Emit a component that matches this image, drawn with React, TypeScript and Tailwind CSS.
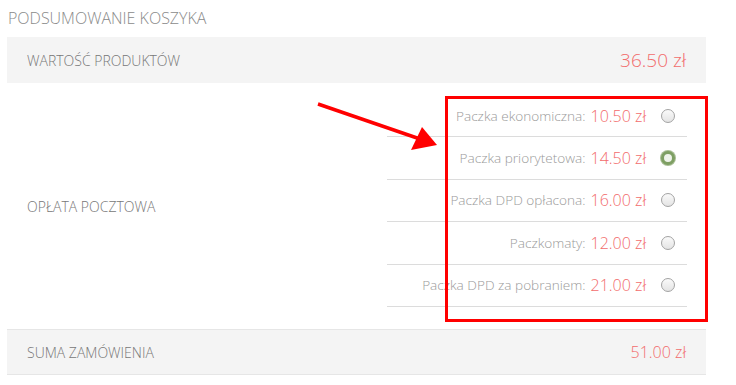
import React, { useState } from 'react';

const options = [
  { id: 'eko', label: 'Paczka ekonomiczna:', price: '10.50 zł' },
  { id: 'prio', label: 'Paczka priorytetowa:', price: '14.50 zł' },
  { id: 'dpd', label: 'Paczka DPD opłacona:', price: '16.00 zł' },
  { id: 'paczkomaty', label: 'Paczkomaty:', price: '12.00 zł' },
  { id: 'dpd-cod', label: 'Paczka DPD za pobraniem:', price: '21.00 zł' },
];

function Radio({ checked, onClick }: { checked: boolean; onClick: () => void }) {
  return (
    <button
      onClick={onClick}
      className={
        checked
          ? 'w-[14px] h-[14px] rounded-full border-[3px] border-[#7e9f63] bg-[#eef3ea] shadow-[0_0_0_1px_#a9bf96]'
          : 'w-[14px] h-[14px] rounded-full border border-[#a3a3a3] bg-gradient-to-b from-[#fafafa] to-[#e4e4e4]'
      }
    />
  );
}

export default function App() {
  const [selected, setSelected] = useState('prio');

  return (
    <div className="relative w-[736px] h-[385px] bg-white font-['Open_Sans',sans-serif] font-light overflow-hidden">
      <h2 className="pl-2 pt-[6px] h-[37px] text-[16px] leading-[24px] text-[#8a8a8a] uppercase font-light">
        Podsumowanie koszyka
      </h2>

      <div className="ml-[7px] w-[699px]">
        <div className="flex items-center justify-between h-[46px] bg-[#f4f4f4] pl-5 pr-5">
          <span className="text-[14px] text-[#777]">WARTOŚĆ PRODUKTÓW</span>
          <span className="text-[19px] text-[#f26c6c]">36.50 zł</span>
        </div>

        <div className="flex h-[246px]">
          <div className="flex items-center pl-5 w-[380px] text-[14px] text-[#777]">OPŁATA POCZTOWA</div>
          <div className="flex flex-col w-[300px] pt-[12px]">
            {options.map((o) => (
              <div
                key={o.id}
                className="flex items-center justify-end h-[42.4px] border-b border-[#dcdcdc] pr-[12px]"
              >
                <span className="text-[13.6px] text-[#9a9a9a]">{o.label}</span>
                <span className="ml-[5px] text-[16px] text-[#f26c6c]">{o.price}</span>
                <span className="ml-[15px] flex items-center">
                  <Radio checked={selected === o.id} onClick={() => setSelected(o.id)} />
                </span>
              </div>
            ))}
          </div>
        </div>

        <div className="flex items-center justify-between h-[46px] bg-[#f4f4f4] border-y border-[#e6e6e6] pl-5 pr-5">
          <span className="text-[14px] text-[#777]">SUMA ZAMÓWIENIA</span>
          <span className="text-[16px] text-[#f26c6c]">51.00 zł</span>
        </div>
      </div>

      {/* annotation overlay */}
      <div className="absolute left-[445px] top-[96px] w-[263px] h-[226px] border-[3px] border-[#f00] pointer-events-none" />
      <svg className="absolute left-0 top-0 pointer-events-none" width="736" height="385">
        <line x1="318" y1="104" x2="420" y2="139" stroke="#f00" strokeWidth="3.5" />
        <polygon points="437,145 411,150 422,127" fill="#f00" />
      </svg>
    </div>
  );
}
